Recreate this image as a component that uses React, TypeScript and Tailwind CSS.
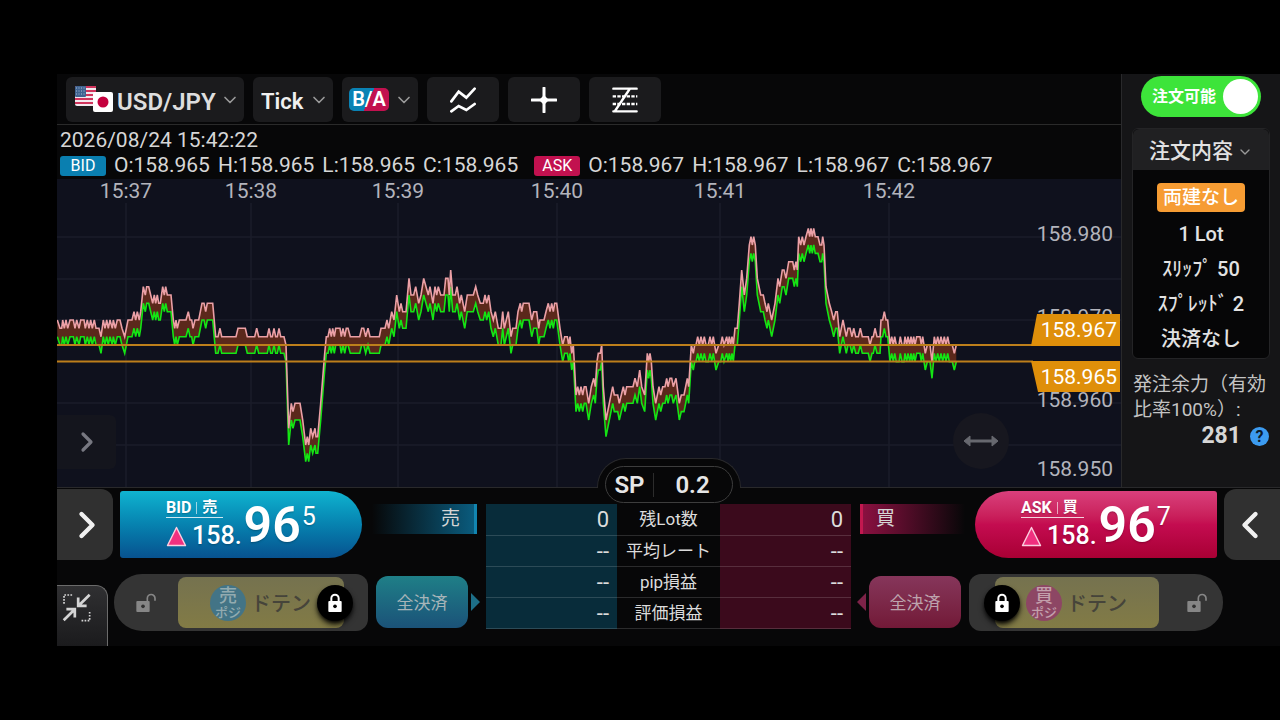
import type { ReactNode } from "react";
import { ChevronDown, ChevronLeft, ChevronRight } from "lucide-react";

type Side = "bid" | "ask";
type Tick = [number, number];

// Tick runs: x in thirds of a pixel from `offset`, level in 0.001 steps above 158.967
const RUNS: { offset: number; ticks: Tick[] }[] = [
  {
    offset: -21,
    ticks: [
      [22, 3], [30, 2], [35, 2], [38, 3], [43, 2], [48, 3], [53, 2], [60, 3], [70, 3], [75, 2],
      [80, 3], [87, 2], [92, 3], [102, 3], [106, 2], [112, 3], [117, 2], [122, 3], [127, 2], [133, 3],
      [138, 2], [147, 2], [153, 1], [160, 3], [165, 2], [170, 3], [175, 2], [180, 3], [187, 2], [190, 3],
      [196, 2], [202, 3], [210, 3], [216, 2], [224, 1], [234, 3], [246, 3], [252, 4], [257, 3], [262, 4],
      [268, 3], [272, 4], [280, 7], [286, 6], [290, 7], [296, 7], [302, 6], [308, 5], [313, 6], [317, 5],
      [322, 6], [326, 5], [331, 5], [338, 7], [343, 6], [347, 7], [352, 6], [363, 6], [370, 3], [374, 2],
      [378, 3], [382, 2], [388, 3], [408, 3], [415, 4], [420, 3], [425, 3], [429, 2], [435, 3], [446, 3],
      [456, 5], [462, 5], [467, 4], [472, 5], [488, 5], [497, 1], [504, 1], [510, 2], [515, 1], [558, 1],
      [564, 2], [586, 2], [592, 1], [614, 1], [620, 2], [626, 1], [652, 1], [657, 2], [662, 1], [667, 1],
      [672, 2], [677, 1], [682, 1], [687, 2], [692, 1], [702, 1], [708, 0], [716, -10], [724, -7], [729, -8],
      [735, -7], [750, -7], [758, -9], [767, -12], [772, -11], [776, -12], [782, -10], [788, -11], [795, -10],
      [798, -11], [803, -11], [812, -7], [818, -4],
    ],
  },
  {
    offset: 789,
    ticks: [
      [14, -1], [19, 1], [24, 1], [29, 2], [34, 1], [38, 2], [43, 1], [47, 2], [60, 2], [64, 1],
      [69, 2], [74, 1], [79, 2], [84, 2], [91, 1], [119, 1], [125, 2], [131, 2], [137, 1], [144, 2],
      [150, 1], [178, 1], [183, 2], [195, 2], [201, 3], [206, 2], [215, 4], [222, 3], [230, 6], [238, 4],
      [243, 5], [248, 4], [258, 4], [267, 8], [273, 6], [281, 6], [287, 7], [296, 5], [303, 6], [311, 8],
      [318, 7], [325, 6], [330, 7], [339, 5], [345, 7], [350, 6], [355, 7], [362, 6], [372, 6], [377, 8],
      [384, 8], [388, 6], [392, 9], [398, 6], [406, 6], [411, 7], [419, 5], [424, 6], [434, 4], [442, 6],
      [460, 6], [467, 7], [473, 6], [481, 5], [490, 5], [495, 6], [500, 5], [506, 6], [513, 4], [520, 3],
      [526, 4], [535, 2], [543, 2], [548, 4], [553, 2], [565, 4], [573, 1], [578, 2], [588, 2], [594, 4],
      [601, 5], [605, 4], [610, 5], [627, 5], [635, 3], [641, 4], [650, 4], [656, 2], [660, 3], [672, 3],
      [678, 4], [685, 5],
    ],
  },
  {
    offset: 1479,
    ticks: [
      [0, 4], [5, 5], [10, 4], [14, 5], [20, 5], [30, 2], [38, 0], [44, 1], [52, 1], [56, 0],
      [60, 1], [65, -1], [70, 0], [74, -3], [78, -6], [83, -5], [88, -6], [93, -5], [98, -6], [103, -5],
      [108, -5], [116, -7], [124, -5], [131, -4], [136, -5], [141, -2], [145, -1], [151, -1], [155, 0],
      [160, -5], [168, -9], [178, -7], [188, -5], [193, -6], [203, -6], [208, -7], [214, -6], [220, -5],
      [225, -6], [230, -5], [249, -5], [255, -4], [262, -5], [269, -3], [275, -5], [284, -6], [292, -1],
      [296, -2], [300, -1], [304, -2], [309, -5], [317, -7], [327, -5], [332, -6], [338, -5], [345, -5],
      [350, -4], [354, -5], [360, -4], [365, -4], [370, -5], [378, -4], [388, -7], [394, -6], [402, -6],
      [412, -4], [416, -5], [424, 0], [430, -1], [434, 0], [438, 0], [443, 1], [448, 0], [453, 1], [458, 0],
      [463, 1], [468, 0], [475, 0], [480, 1], [485, 0], [490, 1], [498, -1], [506, 0], [512, 0], [517, 1],
      [522, 0], [530, 1], [534, 0], [538, 1], [542, 0], [546, 1], [550, 0], [555, 2], [562, 2], [568, 5],
      [575, 9], [583, 6], [590, 8], [598, 12], [603, 13], [607, 12], [611, 13], [616, 12], [622, 8],
      [632, 6], [640, 6], [645, 5], [651, 4], [655, 5], [665, 3], [675, 5], [684, 8], [689, 7], [697, 9],
      [702, 9], [708, 8], [716, 10], [728, 10], [733, 9], [738, 10], [742, 9], [746, 13], [752, 12],
      [757, 13], [762, 12], [768, 13], [775, 14], [779, 13], [783, 14], [787, 13], [791, 14], [796, 13],
      [804, 13], [810, 12], [815, 12], [818, 13],
    ],
  },
  {
    offset: 2229,
    ticks: [
      [72, 12], [78, 7], [88, 5], [95, 4], [101, 3], [107, 4], [112, 4], [119, 1], [124, 2], [129, 3],
      [139, 1], [144, 2], [150, 2], [156, 1], [161, 2], [167, 1], [175, 1], [181, 2], [187, 1], [205, 1],
      [210, 0], [216, 1], [220, 1], [225, 2], [231, 1], [240, 1], [243, 3], [248, 3], [253, 4], [258, 3],
      [263, 3], [270, 0], [275, 1], [280, 0], [284, 1], [289, 0], [297, 0], [301, 1], [306, 0], [312, 0],
      [315, 1], [320, 0], [324, 1], [329, 0], [333, 1], [337, 0], [341, 1], [345, 0], [350, 1], [360, 1],
      [364, 0], [368, 1], [376, -1], [382, 0], [390, 0], [396, -2], [403, 1], [408, 0], [413, 1], [418, 0],
      [423, 1], [428, 0], [433, 1], [438, 0], [443, 1], [448, 0], [457, 0], [463, -1], [469, 0],
    ],
  },
];

const STEP = 8.33;
const ASK_Y = 166;
const SPREAD = STEP * 2;

const TIMES = [
  { x: 69, label: "15:37" },
  { x: 194, label: "15:38" },
  { x: 341, label: "15:39" },
  { x: 500, label: "15:40" },
  { x: 663, label: "15:41" },
  { x: 832, label: "15:42" },
];

const PRICES = [
  { y: 62, label: "158.980" },
  { y: 145, label: "158.970" },
  { y: 228, label: "158.960" },
  { y: 297, label: "158.950" },
];

const GRID_Y = [58, 100, 141, 224, 266];

const POSITION_ROWS = [
  { label: "残Lot数", sell: "0", buy: "0" },
  { label: "平均レート", sell: "--", buy: "--" },
  { label: "pip損益", sell: "--", buy: "--" },
  { label: "評価損益", sell: "--", buy: "--" },
];

const ask = RUNS.flatMap(({ offset, ticks }) =>
  ticks.map(([x, level]) => [(x + offset) / 3, ASK_Y - level * STEP] as Tick),
);
const bid = ask.map(([x, y]) => [x, y + SPREAD] as Tick);
const toPoints = (line: Tick[]) =>
  line.map(([x, y]) => `${x.toFixed(1)},${y.toFixed(1)}`).join(" ");

export default function App() {
  return (
    <div className="flex min-h-screen flex-col justify-center bg-black pl-[57px] font-['Roboto','Noto_Sans_CJK_JP',sans-serif] text-[#d6d6d6]">
      <div className="flex">
        <main className="min-w-0 flex-1 bg-[#070708]">
          <Toolbar />
          <Quotes />
          <Chart />
        </main>
        <OrderSidebar />
      </div>
      <TradePanel />
    </div>
  );
}

function Toolbar() {
  return (
    <div className="flex h-[51px] gap-[9px] border-b border-[#2a2a2a] px-[9px] pt-[3px] pb-[2px]">
      <div className="relative flex w-[178px] items-center rounded-md bg-[#1b1b1d] pl-[9px]">
        <Flags />
        <select
          aria-label="通貨ペア"
          className="absolute inset-0 appearance-none bg-transparent pt-1 pl-[51px] text-2xl font-semibold text-[#dedede] outline-none"
        >
          <option>USD/JPY</option>
        </select>
        <ChevronDown className="pointer-events-none absolute right-1 size-5 text-[#9a9a9a]" />
      </div>
      <div className="relative flex w-20 items-center rounded-md bg-[#1b1b1d]">
        <select
          aria-label="足種"
          className="absolute inset-0 appearance-none bg-transparent pt-1 pl-2 text-[22px] font-semibold text-[#f0f0f0] outline-none"
        >
          <option>Tick</option>
        </select>
        <ChevronDown className="pointer-events-none absolute right-1 size-5 text-[#9a9a9a]" />
      </div>
      <button
        type="button"
        aria-haspopup="listbox"
        className="flex w-[76px] items-center justify-between rounded-md bg-[#1b1b1d] pr-1 pl-[7px]"
      >
        <span className="h-[23px] w-10 rounded-[5px] bg-[linear-gradient(115deg,#0a82b4_50%,#c2114f_50%)] text-center text-xl leading-[23px] font-semibold text-white">
          B/A
        </span>
        <ChevronDown className="size-5 text-[#9a9a9a]" />
      </button>
      <ToolButton label="インジケーター">
        <path d="M4 43 26 14 49 32 74 5M4 73 26 57 49 69 74 51" strokeWidth="8" />
      </ToolButton>
      <ToolButton label="十字カーソル">
        <path d="M39 3V75M3 39H75" strokeWidth="9" />
        <path d="M39 30 48 39 39 48 30 39Z" strokeWidth="8" fill="currentColor" />
      </ToolButton>
      <ToolButton label="描画ツール">
        <path d="M4 5H74M4 73H74M9 72 53 6" strokeWidth="7" />
        <path d="M2 28H76M2 51H76" strokeWidth="7" strokeDasharray="10 4" strokeLinecap="butt" />
      </ToolButton>
    </div>
  );
}

function ToolButton({ label, children }: { label: string; children: ReactNode }) {
  return (
    <button
      type="button"
      aria-label={label}
      className="flex w-[72px] items-center justify-center rounded-md bg-[#1b1b1d] text-white"
    >
      <svg
        viewBox="0 0 78 78"
        className="size-[26px]"
        fill="none"
        stroke="currentColor"
        strokeLinecap="round"
      >
        {children}
      </svg>
    </button>
  );
}

function Flags() {
  return (
    <svg viewBox="0 0 39 28" className="h-7 w-[39px]">
      <rect width="21" height="20" rx="2" fill="#f3e9ee" />
      {[0, 4, 8, 12, 16].map((y) => (
        <rect key={y} y={y} width="21" height="2" fill="#d0345c" />
      ))}
      <rect width="11" height="11" rx="1" fill="#3f6390" />
      {[2, 5, 8].map((y) => (
        <path key={y} d={`M1 ${y}H10`} stroke="#a9bdd3" strokeDasharray="1 1.5" />
      ))}
      <rect x="18" y="6" width="20" height="20" rx="2" fill="#fff" />
      <circle cx="28" cy="16" r="5.5" fill="#c4003e" />
    </svg>
  );
}

function Quotes() {
  return (
    <div className="px-[3px] pt-[3px] text-[21px]">
      <p className="leading-6">2026/08/24 15:42:22</p>
      <div className="flex h-[27px] items-center gap-4">
        <QuoteLine side="bid" price="158.965" />
        <QuoteLine side="ask" price="158.967" />
      </div>
    </div>
  );
}

function QuoteLine({ side, price }: { side: Side; price: string }) {
  return (
    <div className="flex items-center gap-2">
      <span
        className={`h-5 w-[46px] rounded-[3px] text-center text-base leading-5 text-white ${
          side === "bid" ? "bg-[#0a7fb0]" : "bg-[#c2114f]"
        }`}
      >
        {side === "bid" ? "BID" : "ASK"}
      </span>
      {["O", "H", "L", "C"].map((k) => (
        <span key={k}>
          {k}:{price}
        </span>
      ))}
    </div>
  );
}

function Chart() {
  return (
    <div className="relative">
      <svg viewBox="0 0 1064 308" className="block h-auto w-full bg-[#0f111d]">
        <g stroke="#1b1d2a" strokeWidth="1.5">
          {TIMES.map((t) => (
            <path key={t.label} d={`M${t.x} 24V308`} />
          ))}
          {GRID_Y.map((y) => (
            <path key={y} d={`M0 ${y}H1064`} />
          ))}
        </g>
        <polygon points={toPoints([...ask, ...[...bid].reverse()])} fill="#5b281b" />
        <polyline points={toPoints(bid)} fill="none" stroke="#14e514" strokeWidth="1.6" />
        <polyline points={toPoints(ask)} fill="none" stroke="#eba0a6" strokeWidth="1.6" />
        <path d="M0 166H976M0 182.500H976" stroke="#bd7f1b" strokeWidth="2" />
        <g fill="#b3b4bc" fontSize="21">
          {TIMES.map((t) => (
            <text key={t.label} x={t.x} y="19" textAnchor="middle">
              {t.label}
            </text>
          ))}
          {PRICES.map((p) => (
            <text key={p.label} x="1056" y={p.y} textAnchor="end">
              {p.label}
            </text>
          ))}
        </g>
        <path d="M980 135H1063V167H974ZM974 182H1063V213H981Z" fill="#df8f0a" />
        <g fill="#fff" fontSize="21" textAnchor="end">
          <text x="1060" y="158">158.967</text>
          <text x="1060" y="205">158.965</text>
        </g>
      </svg>
      <button
        type="button"
        aria-label="チャートを開く"
        className="absolute bottom-[18px] left-0 flex h-[54px] w-[59px] items-center justify-center rounded-r-md bg-[#14151d] text-[#777881]"
      >
        <ChevronRight className="size-8" strokeWidth={2.4} />
      </button>
      <button
        type="button"
        aria-label="横幅の調整"
        className="absolute right-[112px] bottom-[18px] flex size-14 items-center justify-center rounded-full bg-[#17171f] text-[#67686f]"
      >
        <svg viewBox="0 0 36 14" className="h-[14px] w-9">
          <path d="M6 7H30" stroke="currentColor" strokeWidth="3" />
          <path
            d="M1 7 7 2V12ZM35 7 29 2V12Z"
            fill="currentColor"
            stroke="currentColor"
            strokeLinejoin="round"
          />
        </svg>
      </button>
    </div>
  );
}

function OrderSidebar() {
  return (
    <aside className="w-[159px] shrink-0 border-l border-[#29292b] bg-[#151517] pt-[2px]">
      <label className="mx-auto flex h-[41px] w-[120px] items-center justify-between rounded-full bg-[#3de43a] pr-[3px] pl-[11px] text-base font-bold text-white">
        <input type="checkbox" role="switch" defaultChecked className="sr-only" />
        注文可能
        <span className="size-[35px] rounded-full bg-white" />
      </label>

      <section className="mx-[10px] mt-[11px] rounded-md border border-[#242426] bg-[#060607] text-center text-xl font-medium text-[#e2e2e2]">
        <button
          type="button"
          aria-expanded="true"
          className="flex h-[41px] w-full items-center justify-center gap-1 rounded-t-md bg-[#202022] pt-[4px]"
        >
          <span className="text-[21px]">注文内容</span>
          <ChevronDown className="size-4 text-[#9a9a9a]" />
        </button>
        <p className="mx-auto mt-[13px] h-[29px] w-[88px] rounded-[4px] bg-[#f69c33] text-[19px] leading-[30px] text-white">
          両建なし
        </p>
        <ul className="mt-[5px] mb-px leading-[35px]">
          <li>1 Lot</li>
          <li>ｽﾘｯﾌﾟ 50</li>
          <li>ｽﾌﾟﾚｯﾄﾞ 2</li>
          <li>決済なし</li>
        </ul>
      </section>

      <p className="mt-[13px] pr-2 pl-[11px] text-[19px] leading-[25px] text-[#c4c4c4]">
        発注余力（有効比率100%）:
      </p>
      <div className="flex items-center justify-end gap-[9px] pr-[11px]">
        <span className="text-[23px] leading-7 font-bold">281</span>
        <button
          type="button"
          aria-label="ヘルプ"
          className="size-[19px] rounded-full bg-[#3c9bf0] text-base leading-[19px] font-bold text-[#0c1a2a]"
        >
          ?
        </button>
      </div>
    </aside>
  );
}

function TradePanel() {
  return (
    <section className="relative flex border-t border-[#29292b] bg-[#070708]">
      <div className="absolute -top-[30px] left-1/2 h-[30px] w-[144px] -translate-x-1/2 rounded-t-[29px] border border-b-0 border-[#29292b] bg-[#070708] px-[7px] pt-[7px]">
        <div className="flex h-[37px] items-center rounded-full border border-[#3d3d3d] bg-[#070708] text-2xl font-semibold text-[#e6e6e6]">
          <span className="w-12 border-r border-[#2c2c2c] pl-px text-center leading-6">SP</span>
          <span className="flex-1 text-center">0.2</span>
        </div>
      </div>
      <SideControls side="bid" />
      <PositionTable />
      <SideControls side="ask" />
    </section>
  );
}

function SideControls({ side }: { side: Side }) {
  const isBid = side === "bid";
  const row = isBid ? "flex-row" : "flex-row-reverse";
  return (
    <div className="min-w-0 flex-1 pt-px">
      <div className={`flex h-[71px] ${row}`}>
        <button
          type="button"
          aria-label={isBid ? "左パネル" : "右パネル"}
          className={`flex w-14 items-center justify-center bg-[#303030] text-[#f0f0f0] ${
            isBid ? "rounded-r-xl pl-1" : "rounded-l-xl pr-1"
          }`}
        >
          {isBid ? (
            <ChevronRight className="size-11" strokeWidth={2.4} />
          ) : (
            <ChevronLeft className="size-11" strokeWidth={2.4} />
          )}
        </button>
        <PriceButton side={side} />
        <div
          className={`mt-[15px] flex h-[30px] w-[105px] items-center text-[19px] ${
            isBid
              ? "ml-[10px] justify-end border-r-[3px] border-[#1285b0] bg-linear-to-r from-transparent to-[#0a5b7d] pr-[14px]"
              : "mr-[10px] border-l-[3px] border-[#c2184f] bg-linear-to-r from-[#8a1040] to-transparent pl-[13px]"
          }`}
        >
          {isBid ? "売" : "買"}
        </div>
      </div>
      <div className={`mt-[14px] flex h-[72px] items-start ${row}`}>
        {isBid ? (
          <button
            type="button"
            aria-label="縮小表示"
            className="mt-[11px] flex h-[61px] w-[51px] items-start rounded-tr-xl border-t border-r border-[#6b6b6b] bg-linear-to-b from-[#303032] to-[#1b1b1d] pt-[7px] pl-[5px]"
          >
            <CollapseIcon />
          </button>
        ) : (
          <span className="w-[51px]" />
        )}
        <DotenSlider side={side} />
        <button
          type="button"
          className={`mt-0.5 h-[52px] w-[92px] rounded-xl pt-1 text-[17px] ${
            isBid
              ? "ml-2 bg-linear-to-b from-[#1f7f87] to-[#1b5278] text-[#a7b5b9]"
              : "mr-2 bg-linear-to-b from-[#86365b] to-[#721937] text-[#bda3ad]"
          }`}
        >
          全決済
        </button>
        <svg
          viewBox="0 0 9 18"
          className={`mt-[19px] h-[18px] w-[9px] ${isBid ? "ml-[3px] text-[#1d6f88]" : "mr-[3px] text-[#7d2348]"}`}
        >
          <path d={isBid ? "M0 0 9 9 0 18Z" : "M9 0 0 9 9 18Z"} fill="currentColor" />
        </svg>
      </div>
    </div>
  );
}

function PriceButton({ side }: { side: Side }) {
  const isBid = side === "bid";
  return (
    <button
      type="button"
      className={`mt-0.5 flex h-[67px] w-[242px] pl-[46px] text-white text-shadow-sm ${
        isBid
          ? "ml-[7px] rounded-l-[3px] rounded-r-[34px] bg-linear-to-b from-[#10b4d0] to-[#08528f]"
          : "mr-[7px] rounded-l-[34px] rounded-r-[3px] bg-linear-to-b from-[#d93f7c] via-[#c40c50] to-[#a80034]"
      }`}
    >
      <span className="flex flex-col items-start pt-[7px]">
        <span className="flex h-5 items-center gap-[5px] border-b border-white/80 pr-1.5 text-base leading-[19px] font-bold">
          {isBid ? "BID" : "ASK"}
          <span className="h-3 w-px bg-white/60" />
          <span className="text-[15px]">{isBid ? "売" : "買"}</span>
        </span>
        <span className="flex items-center gap-[5px] pt-[2px] text-[25px] leading-8 font-medium">
          <svg viewBox="0 0 21 21" className="size-[21px]">
            <path d="M10.500 1.500 19.500 19.500H1.500Z" fill="#f0307f" stroke="#fbd0e0" strokeWidth="1.400" strokeLinejoin="round" />
          </svg>
          158.
        </span>
      </span>
      <span className="pl-[2px] text-[50px] leading-[68px] font-semibold">96</span>
      <span className="pt-[10px] pl-px text-[25px] leading-8">{isBid ? "5" : "7"}</span>
    </button>
  );
}

function DotenSlider({ side }: { side: Side }) {
  const isBid = side === "bid";
  return (
    <div
      className={`flex h-[57px] w-[254px] items-center bg-[#343434] ${
        isBid
          ? "ml-[6px] flex-row rounded-l-[28px] rounded-r-xl pl-[22px]"
          : "mr-[6px] flex-row-reverse rounded-l-xl rounded-r-[28px] pr-4"
      }`}
    >
      <OpenLock />
      <button
        type="button"
        className={`relative flex h-[51px] items-center rounded-lg bg-linear-to-b from-[#75724f] to-[#827b45] ${
          isBid ? "ml-[22px] w-[166px] pl-8" : "mr-7 w-[164px] pl-[31px]"
        }`}
      >
        <span
          className={`flex size-9 flex-col items-center justify-center rounded-full ${
            isBid ? "bg-[#437486] text-[#93abb0]" : "bg-[#8d4664] text-[#c3a0ac]"
          }`}
        >
          <span className="text-lg leading-5 font-medium">{isBid ? "売" : "買"}</span>
          <span className="text-[13px] leading-[14px] font-medium">ポジ</span>
        </span>
        <span className="pt-[2px] pl-[5px] text-xl font-medium text-[#46443a]">ドテン</span>
        <span
          className={`absolute flex size-9 items-center justify-center rounded-full bg-black shadow-md shadow-black ${
            isBid ? "-right-[9px]" : "-left-[11px]"
          }`}
        >
          <ClosedLock />
        </span>
      </button>
    </div>
  );
}

function OpenLock() {
  return (
    <svg viewBox="0 0 60 60" className="size-5 text-[#868686]">
      <path d="M34 25V16a11.500 11.500 0 0 1 23 0v7" fill="none" stroke="currentColor" strokeWidth="5" />
      <path d="M4 24H38a3 3 0 0 1 3 3V54a3 3 0 0 1-3 3H4a3 3 0 0 1-3-3V27a3 3 0 0 1 3-3Z" fill="currentColor" />
      <circle cx="21" cy="40" r="5.500" fill="#303030" />
    </svg>
  );
}

function ClosedLock() {
  return (
    <svg viewBox="0 0 60 60" className="size-5 text-white">
      <path d="M19 27V16a11 11 0 0 1 22 0v11" fill="none" stroke="currentColor" strokeWidth="6" />
      <path d="M13 24H47a3 3 0 0 1 3 3V54a3 3 0 0 1-3 3H13a3 3 0 0 1-3-3V27a3 3 0 0 1 3-3Z" fill="currentColor" />
      <circle cx="30" cy="40" r="5.500" fill="#000" />
    </svg>
  );
}

function CollapseIcon() {
  return (
    <svg viewBox="0 0 86 86" className="size-[29px]" fill="none" stroke="#d4d4d4">
      <path d="M6 32V6H34M82 56V82H54" strokeWidth="5" strokeDasharray="5 4" />
      <path d="M82 5 52 35M48 13V38H73M5 81 35 51M13 48H38V73" strokeWidth="8" />
    </svg>
  );
}

function PositionTable() {
  return (
    <table className="mt-4 h-[125px] w-[365px] shrink-0 table-fixed border-collapse self-start leading-[29px] text-[#dcdcdc]">
      <colgroup>
        <col className="w-[131px]" />
        <col />
        <col className="w-[131px]" />
      </colgroup>
      <tbody>
        {POSITION_ROWS.map((r) => (
          <tr key={r.label} className="h-[31px] border-b border-white/15">
            <td className="bg-[#082c3a] p-0 pt-px pr-2 text-right text-[22px]">{r.sell}</td>
            <th scope="row" className="p-0 pt-px text-center text-[17px] font-normal whitespace-nowrap">
              {r.label}
            </th>
            <td className="bg-[#3b0a1c] p-0 pt-px pr-2 text-right text-[22px]">{r.buy}</td>
          </tr>
        ))}
      </tbody>
    </table>
  );
}
